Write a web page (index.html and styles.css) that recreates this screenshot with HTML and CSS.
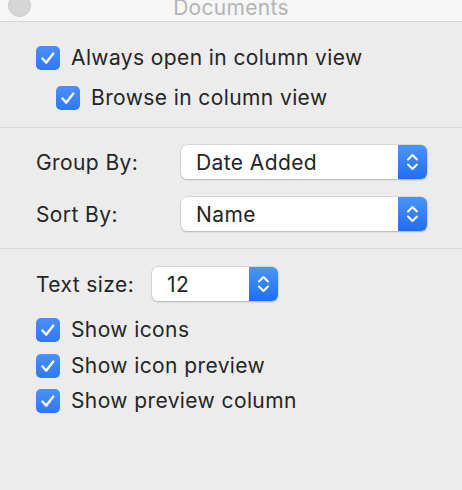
FILE: index.html
```html
<!DOCTYPE html>
<html>
<head>
<meta charset="utf-8">
<link rel="stylesheet" href="styles.css">
</head>
<body>
<div class="window">
  <div class="titlebar">
    <span class="light"></span>
    <span class="title">Documents</span>
  </div>
  <div class="section s1">
    <label class="check"><span class="box"><svg viewBox="0 0 24 24"><path d="M6.5 12.5 L10.3 16.6 L17.3 7.6"/></svg></span><span>Always open in column view</span></label>
    <label class="check indent"><span class="box"><svg viewBox="0 0 24 24"><path d="M6.5 12.5 L10.3 16.6 L17.3 7.6"/></svg></span><span>Browse in column view</span></label>
  </div>
  <div class="section s2">
    <div class="field">
      <span class="label">Group By:</span>
      <div class="popup wide"><span class="value">Date Added</span><span class="stepper"><svg viewBox="0 0 29 34"><path d="M10 14.5 L14.5 10 L19 14.5 M10 19.5 L14.5 24 L19 19.5"/></svg></span></div>
    </div>
    <div class="field">
      <span class="label">Sort By:</span>
      <div class="popup wide"><span class="value">Name</span><span class="stepper"><svg viewBox="0 0 29 34"><path d="M10 14.5 L14.5 10 L19 14.5 M10 19.5 L14.5 24 L19 19.5"/></svg></span></div>
    </div>
  </div>
  <div class="section s3">
    <div class="field small">
      <span class="label">Text size:</span>
      <div class="popup narrow"><span class="value">12</span><span class="stepper"><svg viewBox="0 0 29 34"><path d="M10 14.5 L14.5 10 L19 14.5 M10 19.5 L14.5 24 L19 19.5"/></svg></span></div>
    </div>
    <div class="checks">
      <label class="check"><span class="box"><svg viewBox="0 0 24 24"><path d="M6.5 12.5 L10.3 16.6 L17.3 7.6"/></svg></span><span>Show icons</span></label>
      <label class="check"><span class="box"><svg viewBox="0 0 24 24"><path d="M6.5 12.5 L10.3 16.6 L17.3 7.6"/></svg></span><span>Show icon preview</span></label>
      <label class="check"><span class="box"><svg viewBox="0 0 24 24"><path d="M6.5 12.5 L10.3 16.6 L17.3 7.6"/></svg></span><span>Show preview column</span></label>
    </div>
  </div>
</div>
</body>
</html>
```
FILE: styles.css
```css
* { box-sizing: border-box; }
html, body { margin: 0; padding: 0; }
body {
  width: 462px;
  height: 490px;
  background: #ececec;
  font-family: Inter, "Liberation Sans", sans-serif;
  font-size: 21px;
  letter-spacing: 0.4px;
  color: #252525;
  overflow: hidden;
}
.window { width: 462px; }
.titlebar {
  height: 22px;
  background: #f6f6f6;
  border-bottom: 1px solid #d3d3d3;
  position: relative;
  overflow: hidden;
}
.light {
  position: absolute;
  left: 8px;
  top: -6px;
  width: 23px;
  height: 23px;
  border-radius: 50%;
  background: #d6d6d6;
  border: 1px solid #cbcbcb;
}
.title {
  position: absolute;
  left: 0;
  right: 0;
  top: -4px;
  text-align: center;
  font-size: 21px;
  letter-spacing: 0.3px;
  color: #b4b4b4;
  line-height: 24px;
}
.section { border-bottom: 1px solid #d6d6d6; }
.s1 {
  padding: 24px 0 17px 36px;
  display: flex;
  flex-direction: column;
  gap: 16px;
}
.check {
  display: flex;
  align-items: center;
  gap: 11px;
  height: 24px;
  line-height: 24px;
}
.indent { margin-left: 20px; }
.box {
  width: 24px;
  height: 24px;
  border-radius: 5px;
  background: linear-gradient(#4a90f9, #2f78f3);
  flex: none;
  display: flex;
}
.box svg { width: 24px; height: 24px; }
.box path {
  fill: none;
  stroke: #fff;
  stroke-width: 2.4;
  stroke-linecap: round;
  stroke-linejoin: round;
}
.s2 {
  padding: 17px 0 17px 36px;
  display: flex;
  flex-direction: column;
  gap: 18px;
}
.field {
  display: flex;
  align-items: center;
}
.field .label { width: 145px; }
.field.small .label { width: 116px; }
.popup {
  height: 34px;
  background: #fff;
  border-radius: 6px;
  box-shadow: 0 0 0 0.5px #c2c2c2, 0 1px 1.5px rgba(0,0,0,0.25);
  display: flex;
  align-items: center;
  overflow: hidden;
}
.popup.wide { width: 246px; }
.popup.narrow { width: 126px; }
.value {
  flex: 1;
  padding-left: 15px;
}
.stepper {
  width: 29px;
  height: 34px;
  background: linear-gradient(#4b94f9, #1f6ff2);
  display: flex;
}
.stepper svg { width: 29px; height: 34px; }
.stepper path {
  fill: none;
  stroke: #fff;
  stroke-width: 2;
  stroke-linecap: round;
  stroke-linejoin: round;
}
.s3 {
  border-bottom: none;
  padding: 18px 0 0 36px;
}
.checks {
  margin-top: 17px;
  display: flex;
  flex-direction: column;
  gap: 11.5px;
}
```
